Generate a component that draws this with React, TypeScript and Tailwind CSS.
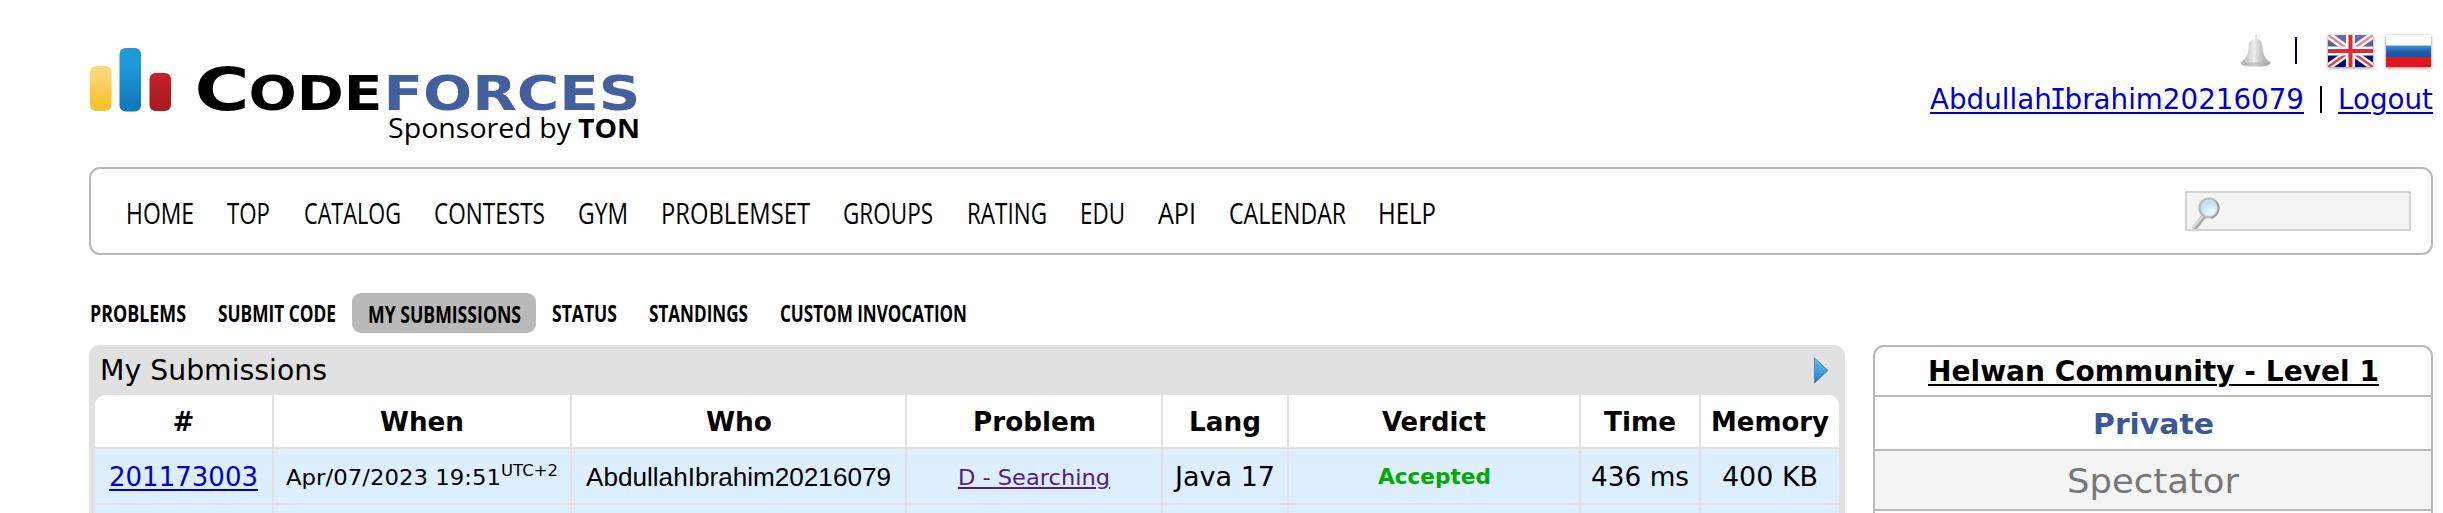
import { useLayoutEffect, useRef, useState } from "react";
import type { ReactNode } from "react";

/** Single line of text squeezed or widened to fill the width of its box. */
function Fit({ className, line = "", children }: { className: string; line?: string; children: ReactNode }) {
  const box = useRef<HTMLSpanElement>(null);
  const inner = useRef<HTMLSpanElement>(null);
  const [scale, setScale] = useState(1);
  useLayoutEffect(() => {
    if (box.current && inner.current) {
      setScale(box.current.offsetWidth / inner.current.getBoundingClientRect().width);
    }
  }, []);
  return (
    <span ref={box} className={`block shrink-0 whitespace-nowrap ${className}`}>
      <span ref={inner} className={`inline-block origin-left ${line}`} style={{ transform: `scaleX(${scale})` }}>
        {children}
      </span>
    </span>
  );
}

const under = "underline decoration-2 underline-offset-[3px]";

function Logo() {
  return (
    <svg className="block h-[110px] w-[560px]" viewBox="89 40 560 110">
      <defs>
        <linearGradient id="y" x1="0" y1="0" x2="0" y2="1">
          <stop offset="0.2" stopColor="#fdd776" />
          <stop offset="0.8" stopColor="#f6c430" />
        </linearGradient>
        <linearGradient id="b" x1="0" y1="0" x2="0" y2="1">
          <stop offset="0.3" stopColor="#1f99d8" />
          <stop offset="0.85" stopColor="#127bbd" />
        </linearGradient>
        <linearGradient id="r" x1="0" y1="0" x2="0" y2="1">
          <stop offset="0.2" stopColor="#c22026" />
          <stop offset="0.9" stopColor="#a61c22" />
        </linearGradient>
      </defs>
      <rect x="90" y="66" width="21.500" height="45" rx="6" fill="url(#y)" />
      <rect x="119.500" y="48" width="21.500" height="63.500" rx="6" fill="url(#b)" />
      <rect x="149.500" y="73" width="21.500" height="38" rx="6" fill="url(#r)" />
      <g fontFamily="DejaVu Sans, sans-serif" fontWeight="700">
        <text x="194.500" y="110" fontSize="58.500" textLength="55" lengthAdjust="spacingAndGlyphs">C</text>
        <text x="248.500" y="110" fontSize="48.500" textLength="134" lengthAdjust="spacingAndGlyphs">ODE</text>
        <text x="383.500" y="110" fontSize="48.500" fill="#445f9d" textLength="257" lengthAdjust="spacingAndGlyphs">FORCES</text>
      </g>
      <g fontFamily="Open Sans, sans-serif" fontSize="27.500">
        <text x="388" y="138" textLength="183" lengthAdjust="spacingAndGlyphs">Sponsored by</text>
        <text x="578" y="138" fontWeight="700" textLength="62" lengthAdjust="spacingAndGlyphs">TON</text>
      </g>
    </svg>
  );
}

function Bell() {
  return (
    <svg className="h-[32px] w-[31px]" viewBox="0 0 31 32">
      <defs>
        <linearGradient id="bell" x1="0" x2="1">
          <stop offset="0.1" stopColor="#b9b9b9" />
          <stop offset="0.45" stopColor="#eeeeee" />
          <stop offset="0.7" stopColor="#c4c4c4" />
          <stop offset="1" stopColor="#a5a5a5" />
        </linearGradient>
      </defs>
      <path d="M15 0h2v4c4 1 5 3 5.500 8 .5 7 2 11 8 15.500 0 3-6 4.500-15 4.500S.5 30.500.5 27.500C6 24 8.500 19 8.500 12 8.500 7 10 5 15 4z" fill="url(#bell)" />
      <ellipse cx="15" cy="29" rx="11" ry="2" fill="#aaa" opacity=".5" />
    </svg>
  );
}

function UkFlag() {
  return (
    <svg className="h-[32px] w-[45px] shadow-[0_1px_3px_#888]" viewBox="0 0 45 32">
      <defs>
        <linearGradient id="gloss" x1="0" y1="0" x2="0" y2="1">
          <stop offset="0" stopColor="#fff" stopOpacity=".4" />
          <stop offset=".5" stopColor="#fff" stopOpacity=".3" />
          <stop offset=".5" stopColor="#fff" stopOpacity="0" />
        </linearGradient>
      </defs>
      <rect width="45" height="32" fill="#0c0c6e" />
      <path d="M0 0L45 32M45 0L0 32" stroke="#fff" strokeWidth="7" />
      <path d="M0 0L45 32M45 0L0 32" stroke="#e8404a" strokeWidth="2.500" />
      <rect width="45" height="32" fill="url(#gloss)" />
      <path d="M22.500 0V32M0 16H45" stroke="#fff" strokeWidth="9" />
      <path d="M22.500 0V32M0 16H45" stroke="#dd2a33" strokeWidth="4" />
    </svg>
  );
}

function RuFlag() {
  return (
    <svg className="h-[32px] w-[45px] shadow-[0_1px_3px_#888]" viewBox="0 0 45 32">
      <defs>
        <linearGradient id="ru" x1="0" y1="0" x2="0" y2="1">
          <stop offset="0" stopColor="#4f8fc9" />
          <stop offset=".5" stopColor="#1c5fae" />
          <stop offset="1" stopColor="#1254a4" />
        </linearGradient>
      </defs>
      <rect width="45" height="32" fill="#fff" />
      <rect y="10.500" width="45" height="12" fill="url(#ru)" />
      <rect y="22" width="45" height="10" fill="#e0161e" />
    </svg>
  );
}

function Magnifier() {
  return (
    <svg className="h-[34px] w-[32px]" viewBox="0 0 32 34">
      <defs>
        <radialGradient id="lens" cx=".6" cy=".7">
          <stop offset="0" stopColor="#f4fcff" />
          <stop offset="1" stopColor="#bfe2f6" />
        </radialGradient>
      </defs>
      <path d="M14 21L4 34" stroke="#a9a9ae" strokeWidth="5" />
      <path d="M13 21L3 33" stroke="#d9d9dd" strokeWidth="2" />
      <circle cx="19" cy="13" r="9.500" fill="url(#lens)" stroke="#b9b9bd" strokeWidth="2.200" />
      <path d="M26 6.500A10 10 0 0 1 21 23" fill="none" stroke="#98989e" strokeWidth="1.500" />
    </svg>
  );
}

const menu = [
  ["HOME", "w-[68px]"],
  ["TOP", "w-[43px]"],
  ["CATALOG", "w-[97px]"],
  ["CONTESTS", "w-[111px]"],
  ["GYM", "w-[50px]"],
  ["PROBLEMSET", "w-[149px]"],
  ["GROUPS", "w-[90px]"],
  ["RATING", "w-[80px]"],
  ["EDU", "w-[45px]"],
  ["API", "w-[38px]"],
  ["CALENDAR", "w-[117px]"],
  ["HELP", "w-[58px]"],
];
const gaps = ["ml-0", "ml-[33px]", "ml-[34px]", "ml-[33px]", "ml-[33px]", "ml-[33px]", "ml-[33px]", "ml-[34px]", "ml-[33px]", "ml-[33px]", "ml-[33px]", "ml-[32px]"];

const th = "flex h-[54px] items-center justify-center border-b-2 border-[#e1e1e1] pt-[3px] text-[26px] font-bold";
const td = "flex h-[56px] items-center justify-center border-b-2 border-[#e1e1e1] bg-[#ddeeff] pt-[3px]";
const cols = "grid grid-cols-[179px_298px_335px_256px_126px_292px_120px_138px]";
const bar = "border-r-2";

export default function App() {
  return (
    <div className="h-[513px] w-[2443px] overflow-hidden bg-white pl-[89px] font-['DejaVu_Sans',sans-serif] text-black">
      <header className="flex h-[167px] w-[2344px] justify-between">
        <div className="pt-[40px]">
          <Logo />
        </div>
        <div className="flex flex-col items-end pt-[35px]">
          <div className="flex h-[32px] items-start">
            <Bell />
            <span className="mt-[2px] ml-[24px] h-[27px] w-[2px] bg-[#000066]" />
            <span className="ml-[31px] flex gap-[13px] pr-[2px]">
              <UkFlag />
              <RuFlag />
            </span>
          </div>
          <div className="mt-[13px] flex h-[38px] items-center text-[29px] leading-[38px] text-[#0000cc]">
            <a className="block">
              <Fit className="w-[374px]" line={under}>
                Abdullah<span className="-mx-[2px] font-['DejaVu_Sans_Mono',monospace]">I</span>brahim20216079
              </Fit>
            </a>
            <span className="mx-[16px] h-[27px] w-[2px] bg-black" />
            <a className="block"><Fit className="w-[95px]" line={under}>Logout</Fit></a>
          </div>
        </div>
      </header>

      <nav className="flex h-[88px] w-[2344px] items-center justify-between rounded-[11px] border-2 border-[#b9b9b9] pr-[20px] pl-[35px]">
        <div className="flex pt-[3px] font-['Open_Sans',sans-serif] text-[28.5px] leading-[40px] font-medium">
          {menu.map(([name, w], i) => (
            <Fit key={name} className={`${w} ${gaps[i]}`}>{name}</Fit>
          ))}
        </div>
        <div className="flex h-[40px] w-[226px] items-start overflow-hidden border-2 border-[#d3d3d3] bg-[#f3f3f3] pt-[2px] pl-[3px]">
          <Magnifier />
        </div>
      </nav>

      <div className="mt-[38px] flex h-[40px] items-center font-['Open_Sans',sans-serif] text-[23px] leading-[42px] font-bold">
        <Fit className="ml-[1px] w-[96px]">PROBLEMS</Fit>
        <Fit className="ml-[32px] w-[118px]">SUBMIT CODE</Fit>
        <div className="ml-[16px] h-[40px] w-[184px] rounded-[9px] bg-[#b9b9b9] pl-[16px]">
          <Fit className="w-[153px]">MY SUBMISSIONS</Fit>
        </div>
        <Fit className="ml-[16px] w-[65px]">STATUS</Fit>
        <Fit className="ml-[32px] w-[99px]">STANDINGS</Fit>
        <Fit className="ml-[32px] w-[187px]">CUSTOM INVOCATION</Fit>
      </div>

      <div className="mt-[12px] flex items-start">
        <section className="h-[168px] w-[1756px] rounded-t-[11px] bg-[#e1e1e1] px-[6px]">
          <div className="flex h-[50px] items-center justify-between pr-[10px] pl-[5px]">
            <Fit className="w-[227px] text-[29px] leading-[52px]">My Submissions</Fit>
            <svg className="h-[27px] w-[16px]" viewBox="0 0 16 27">
              <defs>
                <linearGradient id="arrow" x1="0" y1="0" x2="0" y2="1">
                  <stop offset="0" stopColor="#6ab9ea" />
                  <stop offset=".55" stopColor="#3f9de0" />
                  <stop offset="1" stopColor="#2f73b4" />
                </linearGradient>
              </defs>
              <path d="M1.500 1L15 13.500 1.500 26z" fill="url(#arrow)" stroke="#3d8dcb" strokeWidth="1" />
            </svg>
          </div>
          <div className="h-[118px] overflow-hidden rounded-t-[10px] bg-white">
            <div className={cols}>
              <div className={`${th} ${bar}`}>#</div>
              <div className={`${th} ${bar}`}><Fit className="w-[84px]">When</Fit></div>
              <div className={`${th} ${bar}`}><Fit className="w-[66px]">Who</Fit></div>
              <div className={`${th} ${bar}`}><Fit className="w-[123px]">Problem</Fit></div>
              <div className={`${th} ${bar}`}><Fit className="w-[72px]">Lang</Fit></div>
              <div className={`${th} ${bar}`}><Fit className="w-[104px]">Verdict</Fit></div>
              <div className={`${th} ${bar}`}><Fit className="w-[72px]">Time</Fit></div>
              <div className={th}><Fit className="w-[118px]">Memory</Fit></div>
            </div>
            <div className={cols}>
              <div className={`${td} ${bar} text-[26px] text-[#0000cc]`}><Fit className="w-[149px]" line={under}>201173003</Fit></div>
              <div className={`${td} ${bar} text-[22px]`}>
                <Fit className="w-[215px]">Apr/07/2023 19:51</Fit>
                <Fit className="mb-[14px] w-[57px] text-[16px]">UTC+2</Fit>
              </div>
              <div className={`${td} ${bar} font-['Liberation_Sans',sans-serif] text-[26.5px]`}><Fit className="w-[305px]">AbdullahIbrahim20216079</Fit></div>
              <div className={`${td} ${bar} text-[22px] text-[#551a8b]`}>
                <Fit className="w-[152px]" line="underline decoration-2 underline-offset-[2px]">D - Searching</Fit>
              </div>
              <div className={`${td} ${bar} text-[26px]`}><Fit className="w-[100px]">Java 17</Fit></div>
              <div className={`${td} ${bar} text-[21.5px] font-bold text-[#00aa00]`}><Fit className="w-[113px]">Accepted</Fit></div>
              <div className={`${td} ${bar} text-[26px]`}><Fit className="w-[98px]">436 ms</Fit></div>
              <div className={`${td} text-[26px]`}><Fit className="w-[96px]">400 KB</Fit></div>
            </div>
            <div className={cols}>
              {[0, 1, 2, 3, 4, 5, 6].map((n) => <div key={n} className={`${td} ${bar}`} />)}
              <div className={td} />
            </div>
          </div>
        </section>

        <aside className="ml-[28px] h-[200px] w-[560px] overflow-hidden rounded-t-[11px] border-2 border-[#b9b9b9] text-[29px]">
          <div className="flex h-[50px] items-center justify-center border-b-2 border-[#b9b9b9] pt-px font-bold">
            <Fit className="w-[451px]" line={under}>Helwan Community - Level 1</Fit>
          </div>
          <div className="flex h-[54px] items-center justify-center border-b-2 border-[#b9b9b9] pt-[3px] font-bold text-[#3b5998]">
            <Fit className="w-[121px]">Private</Fit>
          </div>
          <div className="flex h-[60px] items-center justify-center border-b-2 border-[#b9b9b9] bg-[#f4f4f4] pt-[3px] text-[34px] text-[#777]">
            <Fit className="w-[172px]">Spectator</Fit>
          </div>
        </aside>
      </div>
    </div>
  );
}
